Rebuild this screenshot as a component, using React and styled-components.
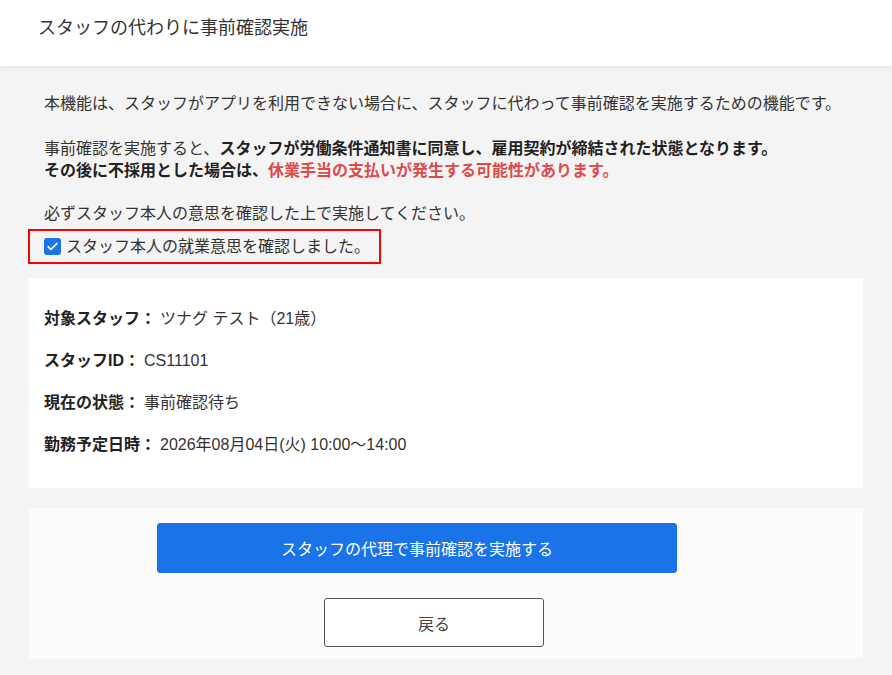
import styled, { createGlobalStyle } from "styled-components";

const GlobalStyle = createGlobalStyle`
  html, body {
    margin: 0;
    padding: 0;
    background: #f4f4f4;
  }
  body {
    font-family: "Liberation Sans", "Noto Sans CJK JP", sans-serif;
    color: #333;
    font-size: 16px;
  }
`;

const Page = styled.div`
  min-height: 675px;
  background: #f4f4f4;
`;

const Header = styled.header`
  height: 66px;
  box-sizing: border-box;
  padding: 17px 38px 0;
  background: #fff;
  box-shadow: 0 2px 6px rgba(0, 0, 0, 0.07);
  position: relative;
`;

const Title = styled.h1`
  margin: 0;
  font-size: 18px;
  font-weight: 400;
  line-height: 22px;
  color: #333;
`;

const Content = styled.main`
  padding: 27px 29px 0;
`;

const Intro = styled.div`
  padding: 0 15px;
`;

const Text = styled.p`
  margin: 0 0 ${(p) => p.$gap ?? 22}px;
  line-height: 22px;
  color: #333;
`;

const Strong = styled.strong`
  font-weight: 700;
  color: ${(p) => (p.$danger ? "#dc4a4a" : "#222")};
`;

const ConfirmBox = styled.label`
  display: inline-flex;
  align-items: center;
  gap: 5px;
  box-sizing: border-box;
  width: 353px;
  height: 35px;
  margin: 0 0 14px -16px;
  padding: 0 0 0 14px;
  border: 2px solid #f00;
  line-height: 22px;
  color: #333;
  cursor: pointer;
`;

const Check = styled.span`
  display: inline-flex;
  align-items: center;
  justify-content: center;
  width: 17px;
  height: 17px;
  border-radius: 3px;
  background: #1a73e8;
`;

const Panel = styled.section`
  background: #fff;
  padding: 30px 15px 32px;
  display: flex;
  flex-direction: column;
  gap: 20px;
`;

const Row = styled.div`
  display: flex;
  align-items: center;
  line-height: 22px;
  color: #333;
`;

const Label = styled.span`
  font-weight: 700;
  color: #222;
  margin-right: 4px;
`;

const Footer = styled.section`
  margin-top: 20px;
  background: #fcfcfc;
  padding: 15px 0 11px;
  display: flex;
  flex-direction: column;
  align-items: flex-start;
  gap: 25px;
`;

const Button = styled.button`
  box-sizing: border-box;
  width: ${(p) => (p.$primary ? 520 : 220)}px;
  height: ${(p) => (p.$primary ? 50 : 49)}px;
  margin-left: ${(p) => p.$offset}px;
  border-radius: 3px;
  border: 1px solid ${(p) => (p.$primary ? "#1a73e8" : "#555")};
  background: ${(p) => (p.$primary ? "#1a73e8" : "#fff")};
  color: ${(p) => (p.$primary ? "#fff" : "#444")};
  font-family: inherit;
  font-size: 16px;
  cursor: pointer;
`;

const info = [
  ["対象スタッフ：", "ツナグ テスト（21歳）"],
  ["スタッフID：", "CS11101"],
  ["現在の状態：", "事前確認待ち"],
  ["勤務予定日時：", "2026年08月04日(火) 10:00〜14:00"],
];

export default function App() {
  return (
    <Page>
      <GlobalStyle />
      <Header>
        <Title>スタッフの代わりに事前確認実施</Title>
      </Header>
      <Content>
        <Intro>
          <Text $gap={23}>
            本機能は、スタッフがアプリを利用できない場合に、スタッフに代わって事前確認を実施するための機能です。
          </Text>
          <Text $gap={21}>
            事前確認を実施すると、
            <Strong>スタッフが労働条件通知書に同意し、雇用契約が締結された状態となります。</Strong>
            <br />
            <Strong>その後に不採用とした場合は、</Strong>
            <Strong $danger>休業手当の支払いが発生する可能性があります。</Strong>
          </Text>
          <Text $gap={4}>必ずスタッフ本人の意思を確認した上で実施してください。</Text>
          <ConfirmBox>
            <Check>
              <svg width="13" height="13" viewBox="0 0 24 24" fill="none">
                <path
                  d="M4 12.5l5 5L20 6.5"
                  stroke="#fff"
                  strokeWidth="3.2"
                  strokeLinecap="round"
                  strokeLinejoin="round"
                />
              </svg>
            </Check>
            スタッフ本人の就業意思を確認しました。
          </ConfirmBox>
        </Intro>
        <Panel>
          {info.map(([label, value]) => (
            <Row key={label}>
              <Label>{label}</Label>
              {value}
            </Row>
          ))}
        </Panel>
        <Footer>
          <Button $primary $offset={128}>
            スタッフの代理で事前確認を実施する
          </Button>
          <Button $offset={295}>戻る</Button>
        </Footer>
      </Content>
    </Page>
  );
}
